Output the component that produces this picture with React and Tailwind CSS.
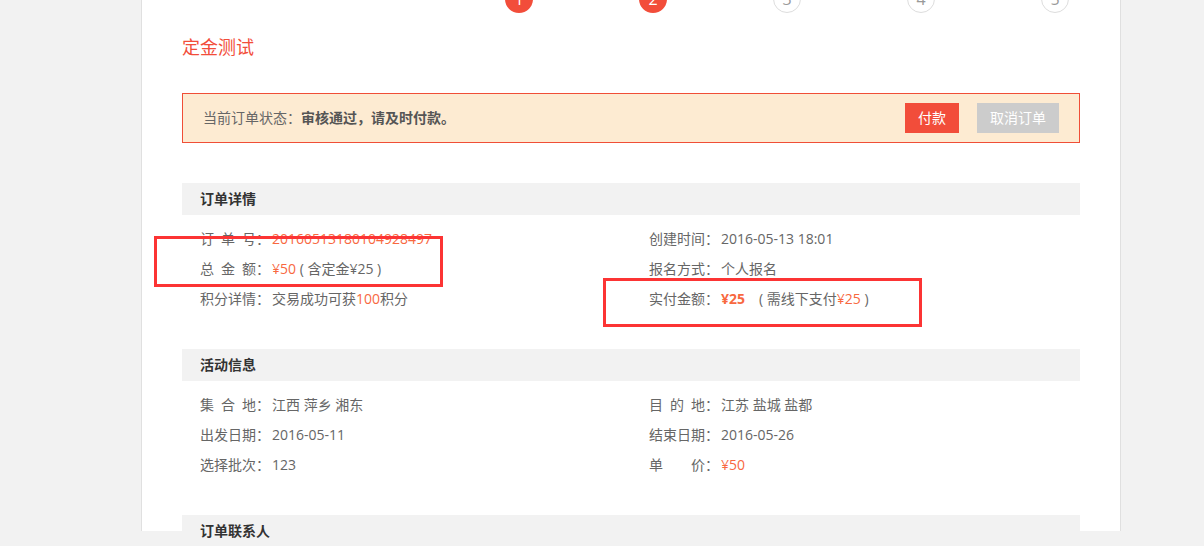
import React from 'react';

const orange = 'text-[#f8683f]';

const Label = ({ children }) => (
  <span className="inline-block w-[56px] [text-align-last:justify]">{children}</span>
);

const Row = ({ label, children }) => (
  <div className="h-[30px] leading-[30px] pl-[18px] whitespace-nowrap">
    <Label>{label}</Label>
    <span className="inline-block w-4">：</span>
    {children}
  </div>
);

const Section = ({ title, left, right, last }) => (
  <div className={last ? '' : 'mb-[35px]'}>
    <div className="h-8 leading-8 bg-[#f2f2f2] pl-[18px] font-bold text-[#333]">{title}</div>
    {left && (
      <div className="grid grid-cols-2 mt-[9px]">
        <div>{left}</div>
        <div>{right}</div>
      </div>
    )}
  </div>
);

const Stepper = () => {
  const steps = [1, 2, 3, 4, 5];
  return (
    <div className="flex justify-end items-center pr-[11px] -mt-[15px] h-7">
      {steps.map((n, i) => (
        <React.Fragment key={n}>
          {i > 0 && <div className="w-[106px] h-[2px] bg-[#dddddd]" />}
          {n <= 2 ? (
            <div className="w-7 h-7 rounded-full bg-[#f24d3a] text-white flex items-center justify-center text-base">{n}</div>
          ) : (
            <div className="w-7 h-7 rounded-full border border-[#dddddd] bg-white text-[#999] flex items-center justify-center text-base">{n}</div>
          )}
        </React.Fragment>
      ))}
    </div>
  );
};

export default function App() {
  return (
    <div
      className="relative h-screen overflow-hidden bg-[#f2f2f2] text-sm text-[#666]"
      style={{ fontFamily: '"Open Sans", "Noto Sans CJK SC", sans-serif' }}
    >
      <div className="ml-[141px] w-[980px] h-full bg-white border-x border-[#e0e0e0] px-10">
        <Stepper />
        <h1 className="mt-[22px] text-lg leading-6 text-[#f24d3a]">定金测试</h1>

        <div className="mt-[34px] h-[50px] border border-[#f04e37] bg-[#fdebd2] flex items-center justify-between pl-5 pr-5">
          <div>
            当前订单状态：<span className="font-bold text-[#555]">审核通过，请及时付款。</span>
          </div>
          <div className="flex gap-[18px]">
            <button className="w-[54px] h-[30px] bg-[#f24d3a] text-white">付款</button>
            <button className="w-[82px] h-[30px] bg-[#cccccc] text-white">取消订单</button>
          </div>
        </div>

        <div className="mt-10">
          <Section
            title="订单详情"
            left={
              <>
                <Row label="订单号"><span className={orange}>20160513180104928497</span></Row>
                <Row label="总金额">
                  <span className={orange}>¥50</span> ( 含定金¥25 )
                </Row>
                <Row label="积分详情">
                  交易成功可获<span className={orange}>100</span>积分
                </Row>
              </>
            }
            right={
              <>
                <Row label="创建时间">2016-05-13 18:01</Row>
                <Row label="报名方式">个人报名</Row>
                <Row label="实付金额">
                  <span className={`${orange} font-bold`}>¥25</span>　( 需线下支付<span className={orange}>¥25</span> )
                </Row>
              </>
            }
          />
          <Section
            title="活动信息"
            left={
              <>
                <Row label="集合地">江西 萍乡 湘东</Row>
                <Row label="出发日期">2016-05-11</Row>
                <Row label="选择批次">123</Row>
              </>
            }
            right={
              <>
                <Row label="目的地">江苏 盐城 盐都</Row>
                <Row label="结束日期">2016-05-26</Row>
                <Row label="单价"><span className={orange}>¥50</span></Row>
              </>
            }
          />
          <Section title="订单联系人" last />
        </div>
      </div>

      <div className="absolute left-[154px] top-[236px] w-[289px] h-[51px] border-[3px] border-[#fc3434]" />
      <div className="absolute left-[603px] top-[278px] w-[319px] h-[49px] border-[3px] border-[#fc3434]" />
    </div>
  );
}
